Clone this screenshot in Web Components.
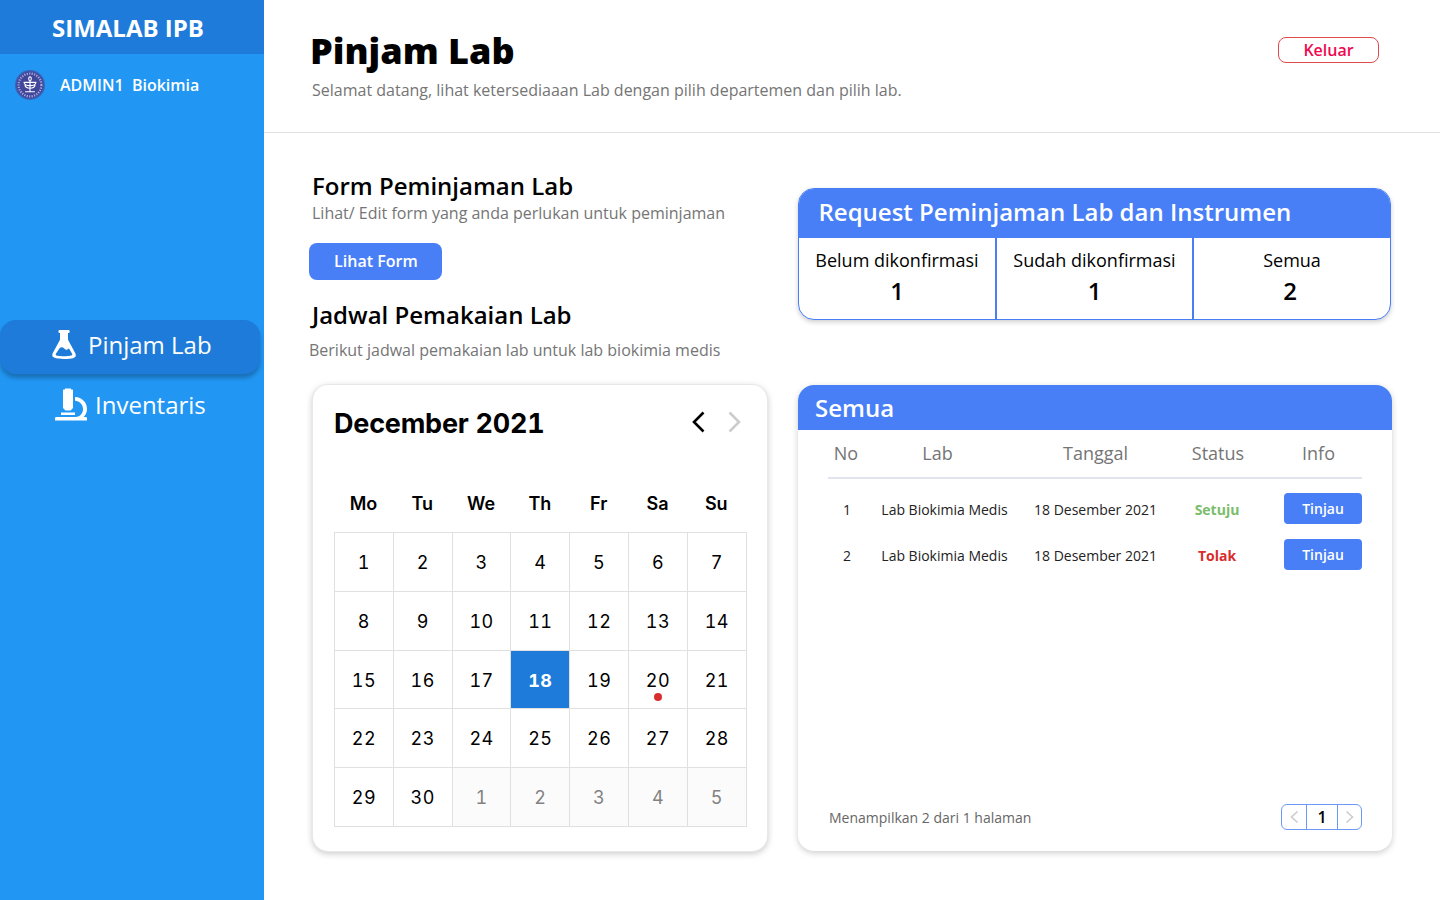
<!DOCTYPE html>
<html lang="id">
<head>
<meta charset="utf-8">
<title>SIMALAB IPB</title>
<style>
html,body{margin:0;height:100%}
body{font-family:"Open Sans","Noto Sans",sans-serif;background:#fff;color:#000;overflow:hidden}
</style>
</head>
<body>
<simalab-app></simalab-app>
<script>
const define = (name, html) => customElements.define(name, class extends HTMLElement {
  constructor() {
    super();
    this.attachShadow({ mode: "open" });
  }
  connectedCallback() {
    const t = document.createElement("template");
    t.innerHTML = `<style>*{box-sizing:border-box}</style>` + (typeof html === "function" ? html(this) : html);
    this.shadowRoot.replaceChildren(t.content.cloneNode(true));
  }
});

define("ipb-seal", `
<style>:host{display:block;width:30px;height:30px;white-space:normal}svg{display:block}</style>
<svg width="30" height="30" viewBox="0 0 30 30">
  <circle cx="15" cy="15" r="15" fill="#3b63b8"/>
  <circle cx="15" cy="15" r="13.600" fill="#41469b" stroke="#3a55b0" stroke-width=".8"/>
  <circle cx="15" cy="15" r="11.400" fill="none" stroke="#a9abd6" stroke-width="2.200" stroke-dasharray="1.200 1.300"/>
  <circle cx="15" cy="15" r="9.400" fill="#41469b"/>
  <g fill="none" stroke="#fff" stroke-width="1.100" stroke-linecap="round">
    <path d="M15 11v10M10.500 21.800h9M9 12.200c.6 4.600 11.400 4.600 12 0M9.600 12.400h10.800M10 15.400c1 3.800 9 3.800 10 0"/>
    <ellipse cx="15" cy="8.800" rx="1.300" ry="1.900"/>
  </g>
</svg>`);

define("side-link", el => `
<style>
:host{display:block}
a{display:flex;align-items:center;width:260px;height:54px;color:#fff;font-size:24px;line-height:32px;border-radius:16px;white-space:nowrap}
:host([active]) a{background:#1e7bd9;box-shadow:0 4px 4px rgba(0,0,0,.25)}
span{font-weight:400;margin-top:var(--lift,-2px)}
::slotted(svg){display:block;flex:none}
</style>
<a><slot name="icon"></slot><span><slot></slot></span></a>`);

define("side-bar", `
<style>
:host{display:flex;flex-direction:column;width:264px;height:900px;background:#2196f3;color:#fff}
.brand{height:54px;background:#1e7bd9;font-size:24px;font-weight:700;line-height:56px;padding-left:52px;white-space:nowrap}
.user{display:flex;align-items:center;height:62px;padding-left:15px;font-size:16px;font-weight:600;white-space:pre}
.user span{margin-left:15px}
nav{margin-top:204px;display:flex;flex-direction:column;gap:5px}
svg{display:block}
.flask{margin:-4px 12px 0 52px}
.micro{margin:-3px 8px 0 55px}
</style>
<div class="brand">SIMALAB IPB</div>
<div class="user"><ipb-seal></ipb-seal><span>ADMIN1  Biokimia</span></div>
<nav>
  <side-link active style="--lift:-4px"><svg slot="icon" class="flask" width="24" height="30" viewBox="0 0 24 30"><path fill="#fff" fill-rule="evenodd" d="M7.500 0h9.200a.9.900 0 0 1 .9.900v1.200a.9.900 0 0 1-.9.900H16v6.700l7.300 13.500C25 27 22.500 29 12 29S-.9 27 .7 23.200L8 9.700V3h-.6a.9.900 0 0 1-.9-.9V.9a.9.900 0 0 1 1-.9ZM7.900 17.800 4.200 23.300C2.600 25.800 5 26.200 12 26.200s9.400-.4 7.800-2.900l-2.900-5c-1.600 2.200-3.300 1.400-4.600.1-1.400-1.400-2.900-1.600-4.400-.6Z"/></svg>Pinjam Lab</side-link>
  <side-link><svg slot="icon" class="micro" width="32" height="33" viewBox="0 0 32 33"><g fill="#fff"><path d="M10 .5h6v1h1.200q.8 0 .8.800V20l-2.500 2.500h-5L8 20V2.300q0-.8.800-.8H10Z"/><path d="M6 24.500h14V27H6zM0 32.500v-2.300Q0 29 1.200 29h19.300c5-.2 7.700-4.200 7.500-8.600-.3-4-3.400-7.200-8-7.600V9c7 .4 12 5.300 12 12 0 3.300-1.400 6.300-3.400 8h2.200q1.200 0 1.200 1.200v2.300Z"/></g></svg>Inventaris</side-link>
</nav>`);

define("page-header", `
<style>
:host{display:flex;justify-content:space-between;align-items:flex-start;height:133px;border-bottom:1px solid #e0e0e0;padding:26px 61px 0 46px}
h1{margin:0;font-size:36px;font-weight:800;line-height:49px;white-space:nowrap}
p{margin:4px 0 0 2px;font-size:16px;line-height:22px;color:#757575;white-space:nowrap}
button{all:unset;box-sizing:border-box;width:101px;height:26px;margin-top:11px;border:1px solid #e04a4a;border-radius:8px;color:#f0094f;font-size:16px;font-weight:600;line-height:24px;text-align:center}
</style>
<div><h1>Pinjam Lab</h1><p>Selamat datang, lihat ketersediaaan Lab dengan pilih departemen dan pilih lab.</p></div>
<button>Keluar</button>`);

define("section-intro", el => `
<style>
:host{display:block}
h2{margin:0;font-size:24px;font-weight:600;line-height:33px;white-space:nowrap}
p{margin:var(--gap,0) 0 0 var(--indent,0);font-size:16px;line-height:22px;color:#757575;white-space:nowrap}
</style>
<h2>${el.getAttribute("heading")}</h2><p><slot></slot></p>`);

define("request-stat", el => `
<style>
:host{display:flex;flex-direction:column;align-items:center;padding-top:10px}
span{font-size:18px;line-height:25px;white-space:nowrap}
b{font-size:24px;font-weight:600;line-height:33px;margin-top:1px;margin-right:var(--nudge,0)}
</style>
<span><slot></slot></span><b>${el.getAttribute("value")}</b>`);

define("request-summary", `
<style>
:host{display:block;width:593px;height:132px;border:1px solid #487ff7;border-radius:16px;background:#fff;overflow:hidden;box-shadow:0 2px 5px rgba(0,0,0,.2)}
header{height:49px;background:#487ff7;color:#fff;font-size:24px;font-weight:600;line-height:46px;padding-left:19.500px;white-space:nowrap}
.stats{display:grid;grid-template-columns:198px 197px 1fr;height:81px}
request-stat:not(:last-child){border-right:2px solid #487ff7}
</style>
<header>Request Peminjaman Lab dan Instrumen</header>
<div class="stats">
<request-stat value="1">Belum dikonfirmasi</request-stat>
<request-stat value="1">Sudah dikonfirmasi</request-stat>
<request-stat value="2" style="--nudge:4px">Semua</request-stat>
</div>`);

define("month-calendar", () => {
  const days = [...Array(30)].map((_, i) => i + 1).concat([1, 2, 3, 4, 5]);
  const cells = days.map((d, i) => `<div class="c${i > 29 + 2 - 2 ? " out" : d === 18 ? " today" : ""}">${d}${d === 20 ? "<i></i>" : ""}</div>`).join("");
  return `
<style>
:host{display:block;width:454px;height:466px;border-radius:15px;background:#fff;font-family:Inter,sans-serif;font-variant-numeric:tabular-nums;padding:20px 21px 0;box-shadow:0 0 0 1px #e8e8e8,0 2px 6px 1px rgba(0,0,0,.2)}
header{display:flex;justify-content:space-between;height:36px;align-items:center}
h3{margin:0;font-size:27px;font-weight:700;letter-spacing:-.22px;white-space:nowrap}
.nav{display:flex;gap:20px;padding-right:4px;margin-top:-2px}
.dow,.grid{display:grid;grid-template-columns:repeat(7,58.820px)}
.dow{margin-top:48px;height:43px;font-size:18px;font-weight:600;line-height:30px;text-align:center}
.grid{width:413px;grid-template-rows:repeat(5,58.800px);border-right:1px solid #e0e0e0;border-bottom:1px solid #e0e0e0;height:295px}
.c{position:relative;border-left:1px solid #e0e0e0;border-top:1px solid #e0e0e0;font-size:18px;line-height:59.400px;text-align:center;letter-spacing:.45px}
.out{background:#fbfbfb;color:#828282}
.today{background:#1e7bd9;background-clip:padding-box;color:#fff;font-weight:700}
i{position:absolute;left:25px;top:42px;width:8px;height:8px;border-radius:50%;background:#d92c2c}
</style>
<header><h3>December 2021</h3><div class="nav">
<svg width="16" height="22" viewBox="0 0 16 22"><path d="M13.500 1.500 4 11 13.500 20.500" fill="none" stroke="#000" stroke-width="2.600"/></svg>
<svg width="16" height="22" viewBox="0 0 16 22"><path d="M3.500 1.500 13 11 3.500 20.500" fill="none" stroke="#ccc" stroke-width="2.600"/></svg>
</div></header>
<div class="dow"><span>Mo</span><span>Tu</span><span>We</span><span>Th</span><span>Fr</span><span>Sa</span><span>Su</span></div>
<div class="grid">${cells}</div>`;
});

define("request-row", el => `
<style>
:host{display:grid;grid-template-columns:38px 157px 145px 98px 96px;height:46px;align-items:center;font-size:14px;color:#222;text-align:center;white-space:nowrap}
b{font-weight:700;color:#7abd6b}
:host([rejected]) b{color:#d92c2c}
button{all:unset;justify-self:end;width:78px;height:31px;margin-top:-2px;border-radius:4px;background:#487ff7;color:#fff;font-size:14px;font-weight:600;line-height:32px;text-align:center}
</style>
<span>${el.getAttribute("no")}</span><span>Lab Biokimia Medis</span><span>18 Desember 2021</span><b><slot></slot></b><button>Tinjau</button>`);

define("page-switch", `
<style>
:host{display:grid;grid-template-columns:24px 32px 1fr;width:81px;height:26px;border:1.500px solid #6c98f8;border-radius:6px}
div{display:flex;align-items:center;justify-content:center;font-size:16px;font-weight:600;color:#000}
.mid{border:solid #6c98f8;border-width:0 1.500px}
</style>
<div><svg width="10" height="14" viewBox="0 0 10 14"><path d="M8.500 1.500 2.500 7l6 5.500" fill="none" stroke="#ccc" stroke-width="1.600"/></svg></div>
<div class="mid">1</div>
<div><svg width="10" height="14" viewBox="0 0 10 14"><path d="M1.500 1.500 7.500 7l-6 5.500" fill="none" stroke="#ccc" stroke-width="1.600"/></svg></div>`);

define("request-list", `
<style>
:host{display:flex;flex-direction:column;width:594px;height:466px;border-radius:16px;background:#fff;overflow:hidden;box-shadow:0 2px 6px rgba(0,0,0,.2)}
header{height:45px;background:#487ff7;color:#fff;font-size:24px;font-weight:600;line-height:45px;padding-left:17px}
.cols{display:grid;grid-template-columns:36px 147px 169px 76px 125px;margin:0 30px;height:49px;border-bottom:2px solid #e0e4ec;color:#757575;font-size:18px;line-height:47px;text-align:center;white-space:nowrap}
.rows{margin:7px 30px 0}
footer{display:flex;justify-content:space-between;align-items:center;margin:auto 30px 21px 31px;font-size:14px;color:#666}
</style>
<header>Semua</header>
<div class="cols"><span>No</span><span>Lab</span><span>Tanggal</span><span>Status</span><span>Info</span></div>
<div class="rows"><request-row no="1">Setuju</request-row><request-row no="2" rejected>Tolak</request-row></div>
<footer><span>Menampilkan 2 dari 1 halaman</span><page-switch></page-switch></footer>`);

define("action-button", `
<style>:host{display:block;width:133px;height:37px;border-radius:8px;background:#487ff7;color:#fff;font-size:16px;font-weight:600;line-height:37px;text-align:center}</style><slot></slot>`);

define("simalab-app", `
<style>
:host{display:grid;grid-template-columns:264px 1fr;height:900px}
.content{display:grid;grid-template-columns:459px 594px;column-gap:30px;padding:36px 0 0 45px}
.form{--indent:0px;--gap:0px;margin-left:3px}
action-button{margin:18.500px 0 0 .4px}
.plan{--gap:8px;--indent:-3px;margin:18.500px 0 0 3px}
month-calendar{margin:24px 0 0 4px}
.right{padding-top:19px}
request-list{margin:65px 0 0}
</style>
<side-bar></side-bar>
<main>
  <page-header></page-header>
  <div class="content">
    <div>
      <section-intro class="form" heading="Form Peminjaman Lab">Lihat/ Edit form yang anda perlukan untuk peminjaman</section-intro>
      <action-button>Lihat Form</action-button>
      <section-intro class="plan" heading="Jadwal Pemakaian Lab">Berikut jadwal pemakaian lab untuk lab biokimia medis</section-intro>
      <month-calendar></month-calendar>
    </div>
    <div class="right"><request-summary></request-summary><request-list></request-list></div>
  </div>
</main>`);
</script>
</body>
</html>
